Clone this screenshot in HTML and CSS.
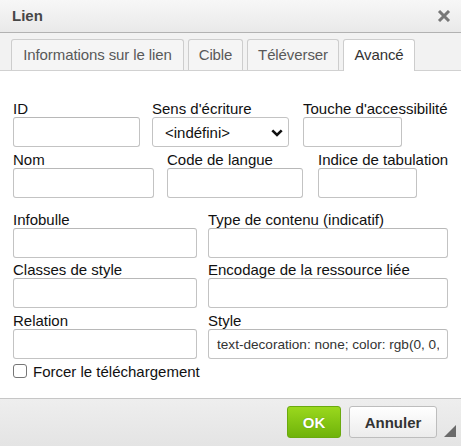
FILE: index.html
```html
<!DOCTYPE html>
<html lang="fr">
<head>
<meta charset="utf-8">
<title>Lien</title>
<link rel="stylesheet" href="styles.css">
</head>
<body>
<div class="dialog">
  <header class="title">
    <span class="title-text">Lien</span>
    <svg class="close" width="14" height="12" viewBox="0 0 14 12" aria-label="Fermer">
      <path d="M2 1 L12 11 M12 1 L2 11" stroke="#777" stroke-width="3" fill="none"/>
    </svg>
  </header>
  <nav class="tabs">
    <div class="tab t-info">Informations sur le lien</div>
    <div class="tab t-cible">Cible</div>
    <div class="tab t-upload">Téléverser</div>
    <div class="tab t-adv active">Avancé</div>
  </nav>
  <main class="content">
    <div class="row row-a">
      <div class="field"><label>ID</label><input class="in w-id" type="text"></div>
      <div class="field"><label>Sens d'écriture</label>
        <div class="select"><span>&lt;indéfini&gt;</span>
          <svg width="12" height="8" viewBox="0 0 12 8"><path d="M1.3 1.3 L6 6 L10.7 1.3" stroke="#111" stroke-width="2.6" fill="none"/></svg>
        </div>
      </div>
      <div class="field"><label>Touche d'accessibilité</label><input class="in w-small" type="text"></div>
    </div>
    <div class="row row-b">
      <div class="field"><label>Nom</label><input class="in w-nom" type="text"></div>
      <div class="field"><label>Code de langue</label><input class="in w-code" type="text"></div>
      <div class="field"><label>Indice de tabulation</label><input class="in w-small" type="text"></div>
    </div>
    <div class="row row-wide first-wide">
      <div class="field"><label>Infobulle</label><input class="in w-left" type="text"></div>
      <div class="field"><label>Type de contenu (indicatif)</label><input class="in w-right" type="text"></div>
    </div>
    <div class="row row-wide tight">
      <div class="field"><label>Classes de style</label><input class="in w-left" type="text"></div>
      <div class="field"><label>Encodage de la ressource liée</label><input class="in w-right" type="text"></div>
    </div>
    <div class="row row-wide">
      <div class="field"><label>Relation</label><input class="in w-left" type="text"></div>
      <div class="field"><label>Style</label><input class="in w-right styled" type="text" value="text-decoration: none; color: rgb(0, 0, 0);"></div>
    </div>
    <label class="check"><span class="box"></span>Forcer le téléchargement</label>
  </main>
  <footer class="footer">
    <button class="btn ok">OK</button>
    <button class="btn cancel">Annuler</button>
    <span class="resize"></span>
  </footer>
</div>
</body>
</html>
```
FILE: styles.css
```css
* { box-sizing: border-box; }
html, body { margin: 0; padding: 0; }
body {
  width: 461px;
  height: 446px;
  overflow: hidden;
  font-family: "Liberation Sans", Arial, sans-serif;
  background: #fff;
}
.dialog {
  width: 461px;
  height: 446px;
  display: flex;
  flex-direction: column;
}
.title {
  height: 33px;
  flex: none;
  border-bottom: 1px solid #b2b2b2;
  background: linear-gradient(#f7f7f7, #e9e9e9);
  display: flex;
  align-items: center;
  justify-content: space-between;
  padding: 0 10px 1px 12px;
}
.title-text {
  font-size: 15px;
  font-weight: bold;
  color: #474747;
}
.close { display: block; margin-top: 1px; }
.tabs {
  height: 38px;
  flex: none;
  display: flex;
  align-items: flex-end;
  gap: 4px;
  padding: 6px 0 0 11px;
  background: #f2f2f2;
  border-bottom: 1px solid #d1d1d1;
}
.tab {
  height: 31px;
  padding: 0;
  text-align: center;
  white-space: nowrap;
  line-height: 30px;
  font-size: 15px;
  letter-spacing: -0.1px;
  color: #595959;
  background: #f5f5f5;
  border: 1px solid #cdcdcd;
  border-bottom: none;
  border-radius: 3px 3px 0 0;
}
.t-info { width: 173px; }
.t-cible { width: 55px; }
.t-upload { width: 92px; }
.t-adv { width: 72px; }
.tab.active {
  height: 32px;
  margin-bottom: -1px;
  background: #fff;
  color: #333;
}
.content {
  flex: 1;
  background: #fff;
  padding: 29px 0 0 13px;
}
.row {
  display: grid;
  margin-bottom: 4px;
}
.row-a { grid-template-columns: 139px 151px 1fr; }
.row-b { grid-template-columns: 154px 151px 1fr; }
.row-wide { grid-template-columns: 195px 1fr; }
.first-wide { margin-top: 13px; }
.tight { margin-top: -1px; }
.field {
  display: flex;
  flex-direction: column;
  align-items: flex-start;
}
.field label {
  font-size: 15px;
  line-height: 17px;
  color: #111;
  white-space: nowrap;
}
.in {
  height: 30px;
  border: 1px solid #c3c3c3;
  border-top-color: #b8b8b8;
  border-radius: 3px;
  background: #fff;
  padding: 0 8px;
  font-family: "Liberation Sans", Arial, sans-serif;
  font-size: 13.6px;
  color: #333;
  outline: none;
}
.w-id { width: 127px; }
.w-small { width: 99px; }
.w-nom { width: 141px; }
.w-code { width: 136px; }
.w-left { width: 184px; }
.w-right { width: 240px; }
.select {
  width: 137px;
  height: 30px;
  border: 1px solid #c3c3c3;
  border-radius: 3px;
  background: #fff;
  display: flex;
  align-items: center;
  justify-content: space-between;
  padding: 0 5px 0 12px;
  font-size: 15px;
  color: #111;
}
.select svg { display: block; margin-top: 1px; }
.check {
  display: flex;
  align-items: center;
  gap: 6px;
  margin-top: 1px;
  font-size: 15px;
  line-height: 17px;
  color: #111;
}
.box {
  width: 14px;
  height: 14px;
  border: 1px solid #767676;
  border-radius: 3px;
  background: #fff;
  margin-top: -2px;
}
.footer {
  height: 48px;
  flex: none;
  position: relative;
  border-top: 1px solid #c6c6c6;
  background: linear-gradient(#eeeeee, #e4e4e4);
  display: flex;
  justify-content: flex-end;
  align-items: flex-start;
  gap: 8px;
  padding: 7px 24px 0 0;
}
.btn {
  height: 32px;
  padding: 0;
  font-family: "Liberation Sans", Arial, sans-serif;
  font-size: 15px;
  font-weight: bold;
  border-radius: 3px;
  cursor: pointer;
}
.ok {
  width: 54px;
  color: #fff;
  background: linear-gradient(#9ad81d, #6fb30a);
  border: 1px solid #6aaa0e;
  text-shadow: 0 0 1px #5a8a10;
}
.cancel {
  width: 88px;
  color: #333;
  background: linear-gradient(#ffffff, #ececec);
  border: 1px solid #bdbdbd;
}
.resize {
  position: absolute;
  right: 5px;
  bottom: 9px;
  width: 0;
  height: 0;
  border-left: 12px solid transparent;
  border-bottom: 12px solid #6a6a6a;
}
```
